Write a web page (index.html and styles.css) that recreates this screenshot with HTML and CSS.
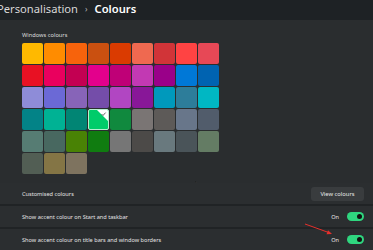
FILE: index.html
```html
<!DOCTYPE html>
<html lang="en">
<head>
    <meta charset="utf-8">
    <title>Colours</title>
    <link rel="stylesheet" href="styles.css">
</head>
<body>
<div class="header">
    <span class="crumb">Personalisation</span>
    <span class="chevron">›</span>
    <span class="current">Colours</span>
</div>

<div class="card palette">
    <div class="label">Windows colours</div>
    <div class="swatches">
        <div class="swatch" style="background:#ffb900"></div>
        <div class="swatch" style="background:#ff8c00"></div>
        <div class="swatch" style="background:#f7630c"></div>
        <div class="swatch" style="background:#ca5010"></div>
        <div class="swatch" style="background:#da3b01"></div>
        <div class="swatch" style="background:#ef6950"></div>
        <div class="swatch" style="background:#d13438"></div>
        <div class="swatch" style="background:#ff4343"></div>
        <div class="swatch" style="background:#e74856"></div>

        <div class="swatch" style="background:#e81123"></div>
        <div class="swatch" style="background:#ea005e"></div>
        <div class="swatch" style="background:#c30052"></div>
        <div class="swatch" style="background:#e3008c"></div>
        <div class="swatch" style="background:#bf0077"></div>
        <div class="swatch" style="background:#c239b3"></div>
        <div class="swatch" style="background:#9a0089"></div>
        <div class="swatch" style="background:#0078d7"></div>
        <div class="swatch" style="background:#0063b1"></div>

        <div class="swatch" style="background:#8e8cd8"></div>
        <div class="swatch" style="background:#6b69d6"></div>
        <div class="swatch" style="background:#8764b8"></div>
        <div class="swatch" style="background:#744da9"></div>
        <div class="swatch" style="background:#b146c2"></div>
        <div class="swatch" style="background:#881798"></div>
        <div class="swatch" style="background:#0099bc"></div>
        <div class="swatch" style="background:#2d7d9a"></div>
        <div class="swatch" style="background:#00b7c3"></div>

        <div class="swatch" style="background:#038387"></div>
        <div class="swatch" style="background:#00b294"></div>
        <div class="swatch" style="background:#018574"></div>
        <div class="swatch selected" style="background:#00cc6a">
            <svg class="tick" width="11" height="11" viewBox="0 0 11 11">
                <polygon points="0,0 11,0 11,11" fill="#fff"/>
                <polyline points="4.5,4 6,5.5 8.6,2.6" fill="none" stroke="#555" stroke-width="0.9"/>
            </svg>
        </div>
        <div class="swatch" style="background:#10893e"></div>
        <div class="swatch" style="background:#7a7574"></div>
        <div class="swatch" style="background:#5d5a58"></div>
        <div class="swatch" style="background:#68768a"></div>
        <div class="swatch" style="background:#515c6b"></div>

        <div class="swatch" style="background:#567c73"></div>
        <div class="swatch" style="background:#486860"></div>
        <div class="swatch" style="background:#498205"></div>
        <div class="swatch" style="background:#107c10"></div>
        <div class="swatch" style="background:#767676"></div>
        <div class="swatch" style="background:#4c4a48"></div>
        <div class="swatch" style="background:#69797e"></div>
        <div class="swatch" style="background:#4a5459"></div>
        <div class="swatch" style="background:#647c64"></div>

        <div class="swatch" style="background:#525e54"></div>
        <div class="swatch" style="background:#847545"></div>
        <div class="swatch" style="background:#7e735f"></div>
    </div>
    <svg class="cursor" width="6" height="10" viewBox="0 0 6 10">
        <polygon points="0.5,0.5 0.5,8 2.2,6.4 3.5,9.3 4.6,8.8 3.4,6 5.6,6" fill="#fff" stroke="#111" stroke-width="0.8"/>
    </svg>
</div>

<div class="rows">
    <div class="row">
        <span class="title">Customised colours</span>
        <button class="button">View colours</button>
    </div>
    <div class="row">
        <span class="title">Show accent colour on Start and taskbar</span>
        <span class="state">On</span>
        <span class="toggle"><span class="knob"></span></span>
    </div>
    <div class="row">
        <span class="title">Show accent colour on title bars and window borders</span>
        <span class="state">On</span>
        <span class="toggle"><span class="knob"></span></span>
        <svg class="arrow" width="30" height="14" viewBox="0 0 30 14">
            <line x1="1" y1="1" x2="26" y2="10" stroke="#e5302c" stroke-width="1"/>
            <polygon points="28,11 22.5,11.2 24,7.3" fill="#e5302c"/>
        </svg>
    </div>
</div>
</body>
</html>
```
FILE: styles.css
```css
* {
    box-sizing: border-box;
}
body {
    margin: 0;
    background: #202325;
    color: #e6e6e6;
    font-family: "Noto Sans", "Open Sans", sans-serif;
    width: 373px;
    height: 250px;
    overflow: hidden;
}
.header {
    height: 20px;
    background: #1e2225;
    display: flex;
    align-items: center;
    gap: 7px;
    margin-left: -3px;
    font-size: 11.2px;
    line-height: 14px;
    padding-bottom: 3px;
}
.header .crumb {
    color: #d8d8d8;
}
.header .chevron {
    font-size: 8px;
    color: #bbb;
}
.header .current {
    font-weight: 600;
    color: #fff;
}
.card {
    background: #2a2d2f;
}
.palette {
    position: relative;
    padding: 10px 22px 9px;
}
.label {
    font-size: 5.7px;
    line-height: 10px;
    margin-bottom: 3px;
    color: #ddd;
}
.swatches {
    display: grid;
    grid-template-columns: repeat(9, 21px);
    grid-auto-rows: 21px;
    gap: 1px;
}
.swatch {
    border-radius: 2px;
    position: relative;
}
.swatch.selected {
    border: 1px solid #b8f0d2;
    overflow: hidden;
}
.tick {
    position: absolute;
    top: 0;
    right: 0;
}
.cursor {
    position: absolute;
    left: 195px;
    top: 161px;
}
.rows {
    display: flex;
    flex-direction: column;
    gap: 2px;
}
.row {
    position: relative;
    height: 21px;
    background: #2b2e30;
    display: flex;
    align-items: center;
    padding: 0 9px 0 22px;
    font-size: 5.6px;
}
.row .title {
    flex: 1;
    color: #e4e4e4;
}
.button {
    font-family: inherit;
    font-size: 5.8px;
    color: #e8e8e8;
    background: #393c3e;
    border: none;
    border-radius: 3px;
    width: 53px;
    height: 14px;
    padding: 0;
}
.state {
    margin-right: 8px;
    color: #e4e4e4;
}
.toggle {
    width: 17px;
    height: 9px;
    border-radius: 5px;
    background: #2fd67f;
    display: flex;
    align-items: center;
    justify-content: flex-end;
    padding-right: 2px;
}
.knob {
    width: 5px;
    height: 5px;
    border-radius: 50%;
    background: #111;
}
.arrow {
    position: absolute;
    left: 304px;
    top: -6px;
}
```
